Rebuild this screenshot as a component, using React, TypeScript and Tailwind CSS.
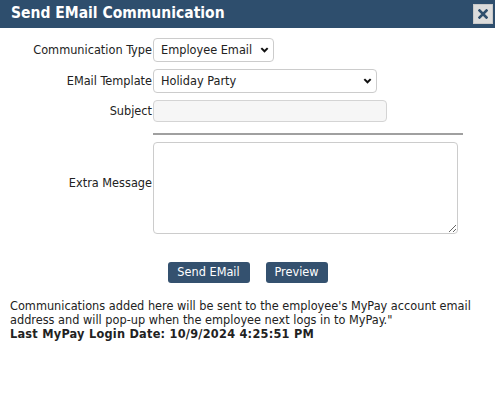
const font = "font-['DejaVu_Sans_Condensed','DejaVu_Sans',sans-serif]"

const Chevron = () => (
    <svg viewBox="0 0 10 7" className="pointer-events-none absolute top-1/2 right-[5px] h-[6px] w-[9px] -translate-y-1/2">
        <path d="M1.3 1.3 L5 5 L8.7 1.3" fill="none" stroke="#111" strokeWidth="2.3" />
    </svg>
)

export default function App() {
    return (
        <div className={`h-[396px] w-[495px] bg-white text-[12.6px] text-[#222] ${font}`}>
            <div className="flex h-[28px] items-center justify-between bg-[#2e4e6d] pr-[2px] pl-[11px]">
                <h1 className="text-[15.5px] font-bold text-white">Send EMail Communication</h1>
                <button className="flex h-[20px] w-[20px] items-center justify-center border border-[#c8c8c8] bg-[#dcdcdc]">
                    <svg viewBox="0 0 10 10" className="h-[10px] w-[10px]">
                        <path d="M1.5 1.5 L8.5 8.5 M8.5 1.5 L1.5 8.5" stroke="#2e4e6d" strokeWidth="2.6" strokeLinecap="square" />
                    </svg>
                </button>
            </div>

            <div className="grid grid-cols-[153px_auto] items-center gap-y-[7px] pt-[10px]">
                <label className="pr-[1px] text-right">Communication Type</label>
                <div className="relative w-[121px]">
                    <select className="h-[24px] w-full appearance-none rounded-[4px] border border-[#ccc] bg-white pl-[7px]">
                        <option>Employee Email</option>
                    </select>
                    <Chevron />
                </div>

                <label className="pr-[1px] text-right">EMail Template</label>
                <div className="relative w-[224px]">
                    <select className="h-[24px] w-full appearance-none rounded-[4px] border border-[#ccc] bg-white pl-[7px]">
                        <option>Holiday Party</option>
                    </select>
                    <Chevron />
                </div>

                <label className="pr-[1px] text-right">Subject</label>
                <div>
                    <input type="text" className="h-[22px] w-[234px] rounded-[4px] border border-[#d4d4d4] bg-[#f6f6f6] px-[4px]" />
                </div>

                <div />
                <hr className="mt-[4px] w-[310px] border-t-2 border-[#a0a0a0]" />

                <label className="pr-[1px] pb-[9px] text-right">Extra Message</label>
                <div>
                    <textarea className="block h-[92px] w-[305px] rounded-[4px] border border-[#ccc] bg-white" />
                </div>
            </div>

            <div className="mt-[28px] flex justify-center gap-[16px]">
                <button className="h-[21px] w-[82px] rounded-[3px] bg-[#34516f] text-white">Send EMail</button>
                <button className="h-[21px] w-[62px] rounded-[3px] bg-[#34516f] text-white">Preview</button>
            </div>

            <div className="mt-[16px] px-[10px] leading-[14px]">
                <p>Communications added here will be sent to the employee's MyPay account email address and will pop-up when the employee next logs in to MyPay."</p>
                <p className="font-bold tracking-[0.25px]">Last MyPay Login Date: 10/9/2024 4:25:51 PM</p>
            </div>
        </div>
    )
}
